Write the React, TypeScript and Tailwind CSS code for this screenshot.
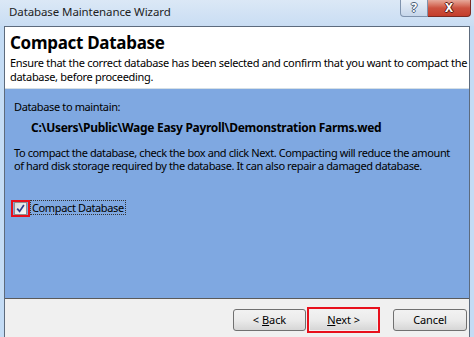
import React from 'react';

const font = { fontFamily: '"Noto Sans", "Open Sans", Arial, sans-serif' };

const outline = (c: string) => ({
  textShadow: `1px 0 0 ${c}, -1px 0 0 ${c}, 0 1px 0 ${c}, 0 -1px 0 ${c}`,
});

const WinButton = ({ children, w }: { children: React.ReactNode; w: string }) => (
  <button className={`mt-[2px] flex h-[22px] items-center justify-center rounded-[3px] border border-[#707070] bg-gradient-to-b from-[#f2f2f2] via-[#ebebeb] to-[#d6d6d6] text-[11px] tracking-[-0.1px] text-black ${w}`}>
    {children}
  </button>
);

export default function App() {
  return (
    <div className="flex h-[337px] w-[474px] flex-col overflow-hidden bg-[#c4dcf5] text-[11px] text-black" style={font}>
      {/* title bar */}
      <div className="flex h-[26px] shrink-0 items-start justify-between bg-gradient-to-b from-[#dbe8f6] to-[#c9ddf3]">
        <span className="pl-[9px] pt-[4px] text-[11.5px] leading-[16px] tracking-[-0.1px] text-[#1e1e1e]">Database Maintenance Wizard</span>
        <div className="mr-[3px] flex h-[17px]">
          <div className="flex w-[28px] items-center justify-center rounded-bl-[4px] border border-t-0 border-[#7f93ad] bg-gradient-to-b from-[#e9f0f8] to-[#c6d6ea] text-[12px] font-bold leading-none text-white" style={outline('#4d5f78')}>
            ?
          </div>
          <div className="flex w-[43px] items-center justify-center rounded-br-[4px] border border-l-0 border-t-0 border-[#7a2a22] bg-gradient-to-b from-[#e6a99b] via-[#cc5240] to-[#c43d2b] text-[12px] font-bold leading-none text-white" style={outline('#5a1a10')}>
            X
          </div>
        </div>
      </div>

      {/* client */}
      <div className="mx-[4px] flex flex-1 flex-col border-l border-r border-t border-[#5d6b7d] bg-[#f0f0f0]">
        <div className="h-[62px] shrink-0 border-b border-[#d5dfe5] bg-white px-[5px] pt-[5px]">
          <div className="text-[17px] font-bold leading-[22px] tracking-[-0.3px]">Compact Database</div>
          <div className="mt-[2px] text-[11px] leading-[14px] tracking-[-0.3px]">
            <div className="whitespace-nowrap">Ensure that the correct database has been selected and confirm that you want to compact the</div>
            <div className="whitespace-nowrap">database, before proceeding.</div>
          </div>
        </div>

        <div className="h-[210px] shrink-0 border-b border-[#5a5a5a] bg-[#7fa8e1] pl-[9px] pt-[11px]">
          <div className="leading-[14px] tracking-[-0.37px]">Database to maintain:</div>
          <div className="mt-[7px] whitespace-nowrap pl-[17px] text-[12px] font-bold leading-[14px] tracking-[-0.3px]">
            C:\Users\Public\Wage Easy Payroll\Demonstration Farms.wed
          </div>
          <div className="mt-[11px] leading-[14px] tracking-[-0.4px]">
            <div className="whitespace-nowrap">To compact the database, check the box and click Next. Compacting will reduce the amount</div>
            <div className="-mt-px whitespace-nowrap">of hard disk storage required by the database. It can also repair a damaged database.</div>
          </div>
          <div className="-ml-[3px] mt-[27px] flex items-start">
            <div className="flex h-[17px] w-[19px] items-center justify-center border-2 border-[#e8101c]">
              <div className="flex h-[13px] w-[13px] items-center justify-center border border-[#8e8f8f] bg-gradient-to-br from-[#d8d8d8] to-[#fbfbfb]">
                <svg width="9" height="9" viewBox="0 0 9 9">
                  <path d="M1.2 4.6 L3.6 7.4 L7.9 1" fill="none" stroke="#2d3e8e" strokeWidth="1.7" />
                </svg>
              </div>
            </div>
            <span className="border border-dotted border-[#333] px-[1px] leading-[13px] tracking-[-0.37px]">Compact Database</span>
          </div>
        </div>

        <div className="flex flex-1 items-start justify-end pr-[2px] pt-[8px]">
          <WinButton w="w-[73px]">
            &lt; <span className="ml-[3px] underline">B</span>ack
          </WinButton>
          <div className="ml-[1px] h-[26px] w-[73px] border-2 border-[#e8101c] p-px">
            <button className="flex h-full w-full items-center justify-center bg-gradient-to-b from-[#f2f2f2] via-[#ebebeb] to-[#d6d6d6] text-[11px] tracking-[-0.1px] text-black">
              <span className="underline">N</span>ext &gt;
            </button>
          </div>
          <div className="ml-[13px]">
            <WinButton w="w-[74px]">Cancel</WinButton>
          </div>
        </div>
      </div>
    </div>
  );
}
